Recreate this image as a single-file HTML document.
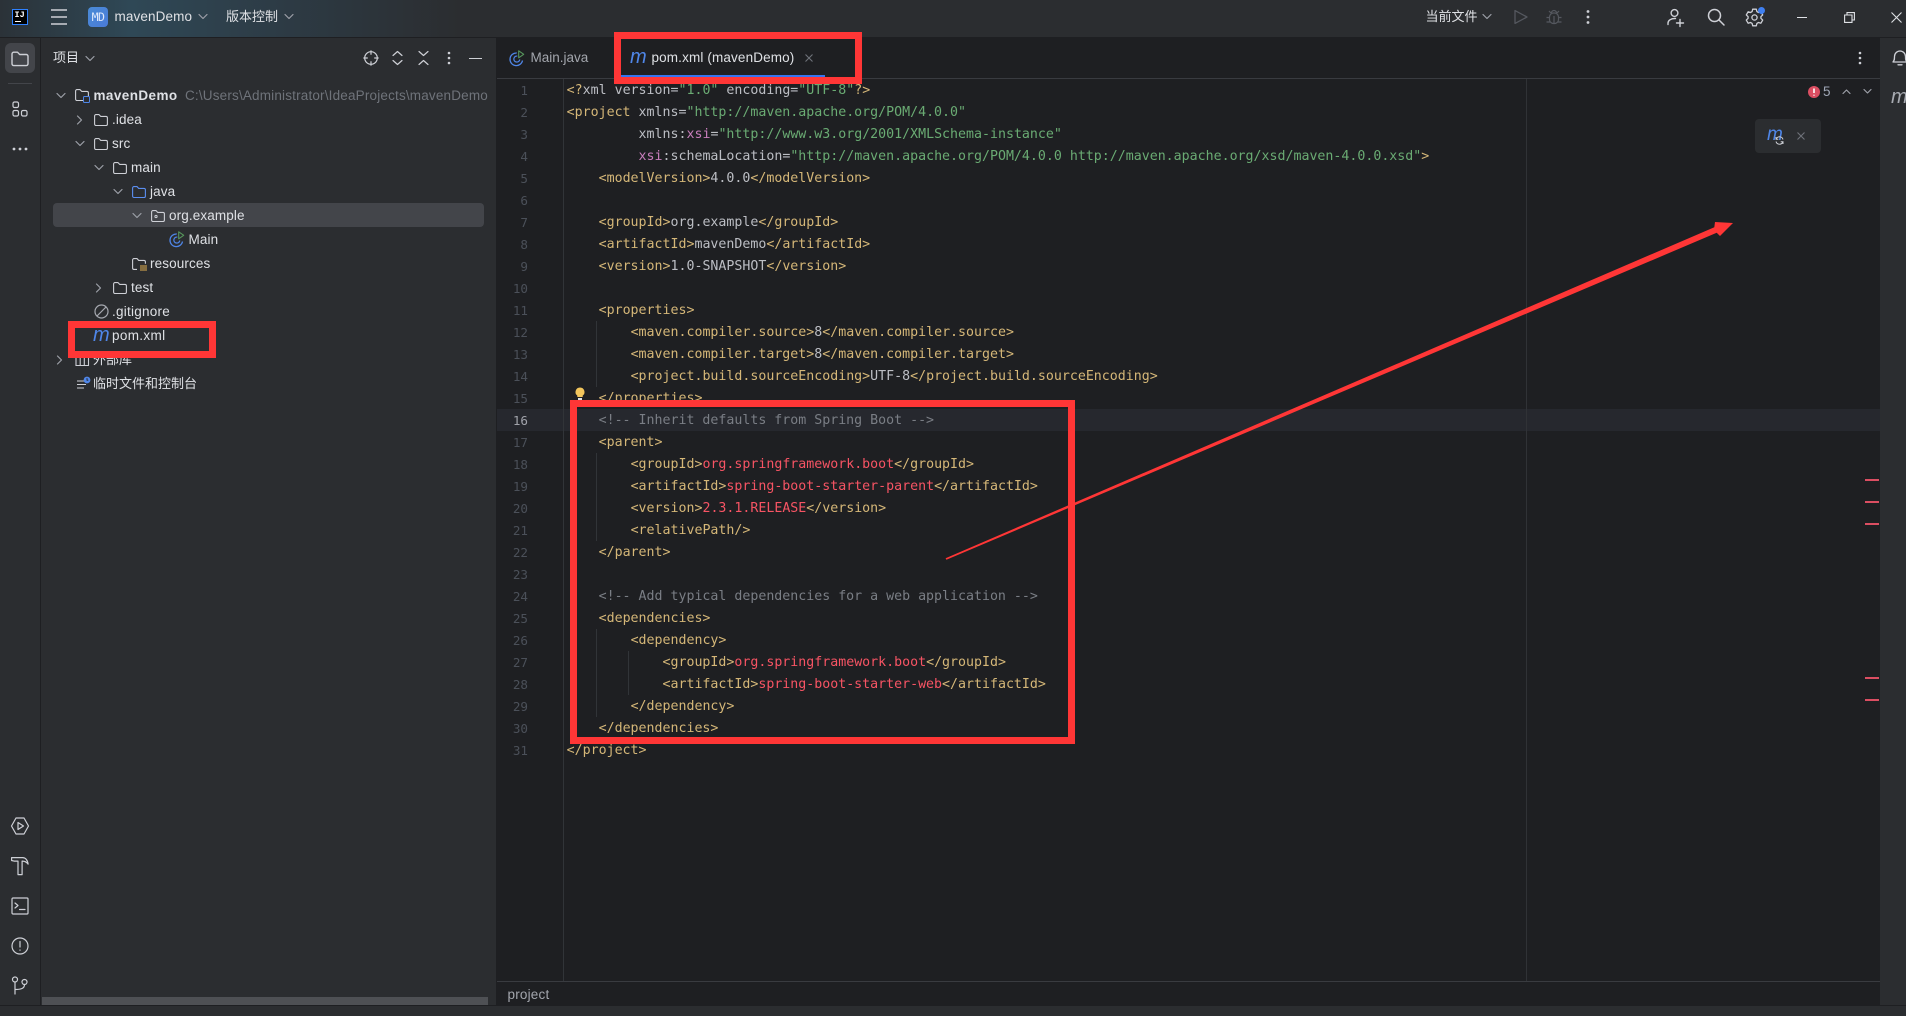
<!DOCTYPE html>
<html lang="zh"><head><meta charset="utf-8"><title>mavenDemo</title>
<style>
*{box-sizing:border-box}
html,body{margin:0;padding:0;width:1906px;height:1016px;overflow:hidden;background:#2b2d30}
body{position:relative;font-family:"Liberation Sans","Noto Sans CJK SC",sans-serif;font-size:13.5px;color:#dfe1e5}
.a{position:absolute}
.tx{position:absolute;white-space:nowrap;line-height:24px;height:24px;letter-spacing:.12px}
svg{position:absolute;overflow:visible}
.ln{position:absolute;white-space:pre;font-family:"DejaVu Sans Mono","Liberation Mono",monospace;font-size:13.28px;line-height:22px;height:22px;left:566.67px;color:#bcbec4;margin-top:1px}
.n{position:absolute;left:496px;width:32px;text-align:right;font-family:"DejaVu Sans Mono","Liberation Mono",monospace;font-size:12.6px;line-height:22px;height:22px;color:#4b5059;margin-top:1px}
.t{color:#d5b778}.s{color:#6aab73}.c{color:#7a7e85}.x{color:#c77dbb}.e{color:#f75464}.v{color:#bcbec4}
.g{position:absolute;width:1px;background:#313438}
.st{position:absolute;left:1865px;width:14px;height:2px;background:#db4e62}
.i{fill:none;stroke:#ced0d6;stroke-width:1.2;stroke-linecap:round;stroke-linejoin:round}
.cv{fill:none;stroke:#9da0a8;stroke-width:1.2;stroke-linecap:round;stroke-linejoin:round}
.red{position:absolute;border:7px solid #ff3636}
</style></head><body>

<!-- title bar -->
<div class="a" style="left:0;top:0;width:1906px;height:37px;background:linear-gradient(90deg,#2b3238 0,#2f4856 130px,#2d3b45 280px,#2b2d30 460px)"></div>
<div class="a" style="left:0;top:37px;width:1906px;height:1px;background:#1e1f22"></div>
<div class="a" style="left:12px;top:9px;width:16px;height:16px;background:#000;border:1.3px solid #2f82ff"></div>
<div class="a" style="left:14.5px;top:10px;font:bold 8.5px/10px 'Liberation Mono',monospace;color:#fff">IJ</div>
<div class="a" style="left:15px;top:21px;width:6px;height:1.2px;background:#fff"></div>
<svg style="left:50px;top:8px" width="18" height="18"><path d="M1 2h16M1 9h16M1 16h16" stroke="#ced0d6" stroke-width="1.4" fill="none"/></svg>
<div class="a" style="left:88px;top:7px;width:20px;height:20px;border-radius:4px;background:linear-gradient(135deg,#4a8bd6,#4a7bd8);color:#dfe9fb;font:11.5px/20px 'DejaVu Sans Mono',monospace;text-align:center;letter-spacing:-.5px">MD</div>
<div class="tx" style="left:114.5px;top:5px;font-size:13.5px">mavenDemo</div>
<svg style="left:198px;top:13px" width="10" height="8"><path class="cv" d="M1 1.5l4 4 4-4"/></svg>
<div class="tx" style="left:226px;top:5px;font-size:13px;letter-spacing:0">版本控制</div>
<svg style="left:284px;top:13px" width="10" height="8"><path class="cv" d="M1 1.5l4 4 4-4"/></svg>

<div class="tx" style="left:1425.5px;top:5px;font-size:13px;letter-spacing:0">当前文件</div>
<svg style="left:1482px;top:13px" width="10" height="8"><path class="cv" d="M1 1.5l4 4 4-4"/></svg>
<svg style="left:1513px;top:9px" width="16" height="16"><path d="M2 1.6v12.8L14 8z" fill="none" stroke="#55585f" stroke-width="1.3" stroke-linejoin="round"/></svg>
<svg style="left:1546px;top:9px" width="16" height="16"><g fill="none" stroke="#55585f" stroke-width="1.2"><rect x="3.500" y="4" width="9" height="10.500" rx="4"/><path d="M5.500 4a2.500 2.500 0 0 1 5 0M.5 8.500h3M12.500 8.500h3M.5 13H4M12 13h3.500M3 2l2 2M13 2l-2 2M8 7v7"/></g></svg>
<svg style="left:1586px;top:9px" width="4" height="16"><circle cx="2" cy="2.5" r="1.4" fill="#ced0d6"/><circle cx="2" cy="8" r="1.4" fill="#ced0d6"/><circle cx="2" cy="13.5" r="1.4" fill="#ced0d6"/></svg>
<svg style="left:1667px;top:8px" width="19" height="19"><g class="i" style="stroke-width:1.4"><circle cx="7.5" cy="5" r="3.4"/><path d="M1 16.5v-1.5c0-2.5 3-4.500 6.500-4.500h1M13 11.500v7M9.500 15h7"/></g></svg>
<svg style="left:1707px;top:8px" width="18" height="18"><g class="i" style="stroke-width:1.5"><circle cx="7.5" cy="7.5" r="6"/><path d="M12 12l5 5"/></g></svg>
<svg style="left:1746px;top:8px" width="18" height="19"><g class="i" style="stroke-width:1.3"><path d="M6.7 1.2h3.6l.6 2.4 1.6.9 2.4-.7 1.8 3.1-1.8 1.8v1.6l1.8 1.8-1.8 3.1-2.4-.7-1.6.9-.6 2.4H6.7l-.6-2.4-1.6-.9-2.4.7L.3 12.1l1.8-1.8V8.7L.3 6.9l1.8-3.1 2.4.7 1.6-.9z"/><circle cx="8.5" cy="9.5" r="2.6"/></g></svg>
<div class="a" style="left:1758px;top:7px;width:7px;height:7px;border-radius:50%;background:#3f7ff0"></div>
<div class="a" style="left:1797px;top:16.5px;width:10px;height:1.2px;background:#dfe1e5"></div>
<svg style="left:1844px;top:12px" width="11" height="11"><path d="M.6 3h7.4v7.4H.6zM3 3V.6h7.4V8H8" fill="none" stroke="#dfe1e5" stroke-width="1.1"/></svg>
<svg style="left:1891px;top:12px" width="11" height="11"><path d="M.5.5l10 10M10.500.5l-10 10" fill="none" stroke="#dfe1e5" stroke-width="1.1"/></svg>

<!-- left tool strip -->
<div class="a" style="left:40px;top:38px;width:1px;height:968px;background:#1e1f22"></div>
<div class="a" style="left:5px;top:43px;width:30px;height:30px;border-radius:6px;background:#43454a"></div>
<svg style="left:11px;top:51px" width="18" height="15"><path class="i" style="stroke-width:1.4" d="M1 3a1.800 1.800 0 0 1 1.800-1.800h3.700l2.200 2.300h6.500a1.800 1.800 0 0 1 1.800 1.800v7.500a1.800 1.800 0 0 1-1.800 1.800H2.800A1.800 1.800 0 0 1 1 12.800z"/></svg>
<div class="a" style="left:8px;top:83px;width:24px;height:1px;background:#43454a"></div>
<svg style="left:12px;top:101px" width="16" height="16"><g class="i"><rect x="1" y="1" width="5.500" height="5.500" rx="1.500"/><rect x="1" y="9.500" width="5.500" height="5.500" rx="1.500"/><rect x="9.500" y="9.500" width="5.500" height="5.500" rx="1.500"/></g></svg>
<svg style="left:12px;top:147px" width="16" height="4"><g fill="#ced0d6"><circle cx="2" cy="2" r="1.400"/><circle cx="8" cy="2" r="1.400"/><circle cx="14" cy="2" r="1.400"/></g></svg>
<svg style="left:11px;top:817px" width="18" height="18"><g class="i" style="stroke-width:1.200"><path d="M5 1h8l4.500 8-4.500 8H5L.500 9z"/><path d="M7 5.500v7l5.500-3.500z"/></g></svg>
<svg style="left:11px;top:857px" width="18" height="18"><path class="i" style="stroke-width:1.200" d="M.6 .6h11c3 0 5 2.500 5.500 6.500-1.500-2-3.500-3-5.500-3h-.5v13.500H7V4.100H3L.6 3.500z"/></svg>
<svg style="left:11px;top:897px" width="18" height="18"><g class="i" style="stroke-width:1.200"><rect x="1" y="1" width="16" height="16" rx="1"/><path d="M4 6l3 2.500-3 2.500M8.500 12.500H14"/></g></svg>
<svg style="left:11px;top:937px" width="18" height="18"><g class="i" style="stroke-width:1.200"><circle cx="9" cy="9" r="8"/><path d="M9 4.500v5.500M9 13v.3"/></g></svg>
<svg style="left:11px;top:976px" width="18" height="19"><g class="i" style="stroke-width:1.200"><circle cx="4" cy="3.500" r="2.500"/><circle cx="13.500" cy="6" r="2.500"/><path d="M4 6v12M4 13.500c6 0 9.500-1 9.500-5"/></g></svg>

<!-- project panel -->
<div class="tx" style="left:53px;top:46px;font-size:13px;letter-spacing:0">项目</div>
<svg style="left:85px;top:55px" width="10" height="8"><path class="cv" d="M1 1.500l4 4 4-4"/></svg>
<svg style="left:363px;top:50px" width="16" height="16"><g class="i" style="stroke-width:1.200"><circle cx="8" cy="8" r="6.300"/><path d="M8 .8v3.500M8 11.700v3.500M.8 8h3.500M11.700 8h3.500"/></g></svg>
<svg style="left:392px;top:50px" width="11" height="16"><path class="i" d="M1 5.500l4.500-4 4.500 4M1 10.500l4.500 4 4.500-4"/></svg>
<svg style="left:418px;top:50px" width="11" height="16"><path class="i" d="M1 1.500l4.500 4 4.500-4M1 14.500l4.500-4 4.500 4"/></svg>
<svg style="left:447px;top:51px" width="4" height="14"><g fill="#ced0d6"><circle cx="2" cy="2" r="1.300"/><circle cx="2" cy="7" r="1.300"/><circle cx="2" cy="12" r="1.300"/></g></svg>
<div class="a" style="left:469px;top:57.500px;width:13px;height:1.300px;background:#ced0d6"></div>

<div class="a" style="left:53px;top:203px;width:431px;height:24px;border-radius:4px;background:#43454a"></div>

<svg width="0" height="0" style="left:0;top:0"><defs>
<symbol id="fo" viewBox="0 0 14 12"><path d="M.6 2a1.400 1.400 0 0 1 1.400-1.400h3l1.700 1.800H12a1.400 1.400 0 0 1 1.400 1.400v6.300a1.400 1.400 0 0 1-1.400 1.400H2a1.400 1.400 0 0 1-1.400-1.400z" fill="none" stroke="#ced0d6" stroke-width="1.100" stroke-linejoin="round"/></symbol>
<symbol id="cd" viewBox="0 0 10 8"><path d="M1 1.500l4 4 4-4" fill="none" stroke="#9da0a8" stroke-width="1.200" stroke-linecap="round" stroke-linejoin="round"/></symbol>
<symbol id="cr" viewBox="0 0 8 10"><path d="M1.500 1l4 4-4 4" fill="none" stroke="#9da0a8" stroke-width="1.200" stroke-linecap="round" stroke-linejoin="round"/></symbol>
</defs></svg>

<!-- tree -->
<svg style="left:56px;top:91.500px" width="10" height="8"><use href="#cd"/></svg>
<svg style="left:75px;top:89px" width="14" height="12"><use href="#fo"/></svg>
<div class="a" style="left:83px;top:96px;width:7px;height:7px;border:1.200px solid #4f86e8;border-radius:1.500px;background:#2b2d30"></div>
<div class="tx" style="left:93.500px;top:84px;font-weight:bold;font-size:13.500px;letter-spacing:.42px">mavenDemo</div>
<div class="tx" style="left:185px;top:84px;color:#6f737a;font-size:13.500px;letter-spacing:.18px">C:\Users\Administrator\IdeaProjects\mavenDemo</div>

<svg style="left:76px;top:114.500px" width="8" height="10"><use href="#cr"/></svg>
<svg style="left:94px;top:114px" width="14" height="12"><use href="#fo"/></svg>
<div class="tx" style="left:112px;top:107.500px">.idea</div>

<svg style="left:75px;top:139.500px" width="10" height="8"><use href="#cd"/></svg>
<svg style="left:94px;top:138px" width="14" height="12"><use href="#fo"/></svg>
<div class="tx" style="left:112px;top:131.500px">src</div>

<svg style="left:94px;top:163.500px" width="10" height="8"><use href="#cd"/></svg>
<svg style="left:113px;top:162px" width="14" height="12"><use href="#fo"/></svg>
<div class="tx" style="left:131px;top:155.500px">main</div>

<svg style="left:113px;top:187.500px" width="10" height="8"><use href="#cd"/></svg>
<svg style="left:132px;top:186px" width="14" height="12"><path d="M.6 2a1.400 1.400 0 0 1 1.400-1.400h3l1.700 1.800H12a1.400 1.400 0 0 1 1.400 1.400v6.300a1.400 1.400 0 0 1-1.400 1.400H2a1.400 1.400 0 0 1-1.400-1.400z" fill="none" stroke="#5b8ef0" stroke-width="1.100"/></svg>
<div class="tx" style="left:150px;top:179.500px">java</div>

<svg style="left:132px;top:211.500px" width="10" height="8"><use href="#cd"/></svg>
<svg style="left:151px;top:210px" width="14" height="12"><use href="#fo"/><circle cx="5" cy="6.500" r="1.100" fill="none" stroke="#ced0d6"/></svg>
<div class="tx" style="left:169px;top:203.500px">org.example</div>

<svg style="left:170px;top:231px" width="15" height="16"><g fill="none"><path d="M12.500 10.500A6.300 6.300 0 1 1 6.800 3" stroke="#4f86e8" stroke-width="1.300"/><path d="M9.800 9.500a3 3 0 1 1-2.500-3.400" stroke="#4f86e8" stroke-width="1.200"/><path d="M8.700 .8v7l5-3.500z" stroke="#57965c" stroke-width="1.100" stroke-linejoin="round"/></g></svg>
<div class="tx" style="left:188.500px;top:227.500px">Main</div>

<svg style="left:132px;top:258px" width="16" height="13"><path d="M5 11.400H2a1.400 1.400 0 0 1-1.400-1.400V2A1.400 1.400 0 0 1 2 .6h3l1.700 1.800H12a1.400 1.400 0 0 1 1.400 1.400v2" fill="none" stroke="#ced0d6" stroke-width="1.100"/><path d="M8 8h7M8 10h7M8 12h7" stroke="#e0b050" stroke-width="1.100"/></svg>
<div class="tx" style="left:150px;top:251.500px">resources</div>

<svg style="left:95px;top:282.500px" width="8" height="10"><use href="#cr"/></svg>
<svg style="left:113px;top:282px" width="14" height="12"><use href="#fo"/></svg>
<div class="tx" style="left:131px;top:275.500px">test</div>

<svg style="left:94px;top:304px" width="15" height="15"><g fill="none" stroke="#a6a9b0" stroke-width="1.200"><circle cx="7.500" cy="7.500" r="6.500"/><path d="M3 12l9-9"/></g></svg>
<div class="tx" style="left:112px;top:299.500px;letter-spacing:.25px">.gitignore</div>

<div class="a" style="left:93px;top:327px;font:italic 20px/16px 'Liberation Sans',sans-serif;color:#4f86e8;letter-spacing:0">m</div>
<div class="tx" style="left:112px;top:323.500px;letter-spacing:.35px">pom.xml</div>

<svg style="left:56px;top:355px" width="8" height="10"><use href="#cr"/></svg>
<svg style="left:75px;top:354px" width="15" height="13"><path d="M1 1v10.500h12.500V1M5.200 1v10.500M9.300 1v10.500" fill="none" stroke="#ced0d6" stroke-width="1.100"/></svg>
<div class="tx" style="left:93px;top:348px;font-size:13px;letter-spacing:0">外部库</div>

<svg style="left:76px;top:376px" width="16" height="15"><path d="M1 5h7M1 8.500h9M1 12h7M1 15h0" fill="none" stroke="#ced0d6" stroke-width="1.100"/><circle cx="11" cy="4" r="3.400" fill="#4f86e8"/><path d="M11 2v2.200h1.300" stroke="#1e1f22" fill="none" stroke-width=".8"/></svg>
<div class="tx" style="left:93px;top:372px;font-size:13px;letter-spacing:0">临时文件和控制台</div>

<div class="a" style="left:42px;top:997px;width:446px;height:8px;background:#4e5054"></div>

<!-- editor -->
<div class="a" style="left:496px;top:38px;width:1384px;height:968px;background:#1e1f22"></div>
<div class="a" style="left:497px;top:78px;width:1383px;height:1px;background:#393b40"></div>

<svg style="left:510px;top:50px" width="15" height="16"><g fill="none"><path d="M12.500 10.500A6.300 6.300 0 1 1 6.800 3" stroke="#4f86e8" stroke-width="1.300"/><path d="M9.800 9.500a3 3 0 1 1-2.500-3.400" stroke="#4f86e8" stroke-width="1.200"/><path d="M8.700 .8v7l5-3.500z" stroke="#57965c" stroke-width="1.100" stroke-linejoin="round"/></g></svg>
<div class="tx" style="left:530.500px;top:46px;color:#a3a6ad;letter-spacing:0">Main.java</div>
<div class="a" style="left:630px;top:49px;font:italic 20px/16px 'Liberation Sans',sans-serif;color:#4f86e8">m</div>
<div class="tx" style="left:651.500px;top:46px;color:#dfe1e5;letter-spacing:.14px">pom.xml (mavenDemo)</div>
<svg style="left:805px;top:54px" width="8" height="8"><path d="M.5.500l7 7M7.500.500l-7 7" stroke="#6f737a" stroke-width="1.100" fill="none"/></svg>
<div class="a" style="left:621px;top:75px;width:204px;height:3px;background:#3574f0"></div>
<svg style="left:1858px;top:51px" width="4" height="14"><g fill="#ced0d6"><circle cx="2" cy="2" r="1.300"/><circle cx="2" cy="7" r="1.300"/><circle cx="2" cy="12" r="1.300"/></g></svg>

<div class="a" style="left:497px;top:409px;width:1383px;height:22px;background:#26282e"></div>
<div class="g" style="left:563px;top:79px;height:902px"></div>
<div class="g" style="left:1526px;top:79px;height:902px;background:#303236"></div>
<div class="g" style="left:596px;top:321px;height:66px"></div>
<div class="g" style="left:596px;top:453px;height:88px"></div>
<div class="g" style="left:596px;top:629px;height:88px"></div>
<div class="g" style="left:628px;top:651px;height:44px"></div>

<div class="n" style="top:79px">1</div><div class="n" style="top:101px">2</div><div class="n" style="top:123px">3</div><div class="n" style="top:145px">4</div><div class="n" style="top:167px">5</div><div class="n" style="top:189px">6</div><div class="n" style="top:211px">7</div><div class="n" style="top:233px">8</div><div class="n" style="top:255px">9</div><div class="n" style="top:277px">10</div><div class="n" style="top:299px">11</div><div class="n" style="top:321px">12</div><div class="n" style="top:343px">13</div><div class="n" style="top:365px">14</div><div class="n" style="top:387px">15</div><div class="n" style="top:409px;color:#a1a3ab">16</div><div class="n" style="top:431px">17</div><div class="n" style="top:453px">18</div><div class="n" style="top:475px">19</div><div class="n" style="top:497px">20</div><div class="n" style="top:519px">21</div><div class="n" style="top:541px">22</div><div class="n" style="top:563px">23</div><div class="n" style="top:585px">24</div><div class="n" style="top:607px">25</div><div class="n" style="top:629px">26</div><div class="n" style="top:651px">27</div><div class="n" style="top:673px">28</div><div class="n" style="top:695px">29</div><div class="n" style="top:717px">30</div><div class="n" style="top:739px">31</div>

<div class="ln" style="top:79px"><span class="t">&lt;?</span>xml version=<span class="s">"1.0"</span> encoding=<span class="s">"UTF-8"</span><span class="t">?&gt;</span></div>
<div class="ln" style="top:101px"><span class="t">&lt;project</span> xmlns=<span class="s">"http://maven.apache.org/POM/4.0.0"</span></div>
<div class="ln" style="top:123px">         xmlns:<span class="x">xsi</span>=<span class="s">"http://www.w3.org/2001/XMLSchema-instance"</span></div>
<div class="ln" style="top:145px">         <span class="x">xsi</span>:schemaLocation=<span class="s">"http://maven.apache.org/POM/4.0.0 http://maven.apache.org/xsd/maven-4.0.0.xsd"</span><span class="t">&gt;</span></div>
<div class="ln" style="top:167px">    <span class="t">&lt;modelVersion&gt;</span>4.0.0<span class="t">&lt;/modelVersion&gt;</span></div>
<div class="ln" style="top:211px">    <span class="t">&lt;groupId&gt;</span>org.example<span class="t">&lt;/groupId&gt;</span></div>
<div class="ln" style="top:233px">    <span class="t">&lt;artifactId&gt;</span>mavenDemo<span class="t">&lt;/artifactId&gt;</span></div>
<div class="ln" style="top:255px">    <span class="t">&lt;version&gt;</span>1.0-SNAPSHOT<span class="t">&lt;/version&gt;</span></div>
<div class="ln" style="top:299px">    <span class="t">&lt;properties&gt;</span></div>
<div class="ln" style="top:321px">        <span class="t">&lt;maven.compiler.source&gt;</span>8<span class="t">&lt;/maven.compiler.source&gt;</span></div>
<div class="ln" style="top:343px">        <span class="t">&lt;maven.compiler.target&gt;</span>8<span class="t">&lt;/maven.compiler.target&gt;</span></div>
<div class="ln" style="top:365px">        <span class="t">&lt;project.build.sourceEncoding&gt;</span>UTF-8<span class="t">&lt;/project.build.sourceEncoding&gt;</span></div>
<div class="ln" style="top:387px">    <span class="t">&lt;/properties&gt;</span></div>
<div class="ln c" style="top:409px;color:#7a7e85">    &lt;!-- Inherit defaults from Spring Boot --&gt;</div>
<div class="ln" style="top:431px">    <span class="t">&lt;parent&gt;</span></div>
<div class="ln" style="top:453px">        <span class="t">&lt;groupId&gt;</span><span class="e">org.springframework.boot</span><span class="t">&lt;/groupId&gt;</span></div>
<div class="ln" style="top:475px">        <span class="t">&lt;artifactId&gt;</span><span class="e">spring-boot-starter-parent</span><span class="t">&lt;/artifactId&gt;</span></div>
<div class="ln" style="top:497px">        <span class="t">&lt;version&gt;</span><span class="e">2.3.1.RELEASE</span><span class="t">&lt;/version&gt;</span></div>
<div class="ln" style="top:519px">        <span class="t">&lt;relativePath/&gt;</span></div>
<div class="ln" style="top:541px">    <span class="t">&lt;/parent&gt;</span></div>
<div class="ln c" style="top:585px;color:#7a7e85">    &lt;!-- Add typical dependencies for a web application --&gt;</div>
<div class="ln" style="top:607px">    <span class="t">&lt;dependencies&gt;</span></div>
<div class="ln" style="top:629px">        <span class="t">&lt;dependency&gt;</span></div>
<div class="ln" style="top:651px">            <span class="t">&lt;groupId&gt;</span><span class="e">org.springframework.boot</span><span class="t">&lt;/groupId&gt;</span></div>
<div class="ln" style="top:673px">            <span class="t">&lt;artifactId&gt;</span><span class="e">spring-boot-starter-web</span><span class="t">&lt;/artifactId&gt;</span></div>
<div class="ln" style="top:695px">        <span class="t">&lt;/dependency&gt;</span></div>
<div class="ln" style="top:717px">    <span class="t">&lt;/dependencies&gt;</span></div>
<div class="ln" style="top:739px"><span class="t">&lt;/project&gt;</span></div>

<!-- lightbulb -->
<svg style="left:575px;top:387px" width="10" height="14"><path d="M5 .500a4.500 4.500 0 0 1 2.700 8.100v1.400H2.300V8.600A4.500 4.500 0 0 1 5 .500z" fill="#f2c55c"/><rect x="3" y="11" width="4" height="2" fill="#dfe1e5"/></svg>

<!-- inspection widget -->
<svg style="left:1808px;top:86px" width="12" height="12"><circle cx="6" cy="6" r="6" fill="#db4e62"/><path d="M6 2.500v4.500M6 8.800v.8" stroke="#fff" stroke-width="1.600"/></svg>
<div class="tx" style="left:1823px;top:80px;color:#9fa6b5;font-size:13.500px">5</div>
<svg style="left:1842px;top:88px" width="9" height="7"><path class="cv" d="M1 5.500l3.500-3.500 3.500 3.500"/></svg>
<svg style="left:1863px;top:88px" width="9" height="7"><path class="cv" d="M1 1.500l3.500 3.500 3.500-3.500"/></svg>

<!-- maven reload popup -->
<div class="a" style="left:1755px;top:119px;width:66px;height:34px;border-radius:4px;background:#2b2d30"></div>
<div class="a" style="left:1767px;top:127px;font:italic 19px/16px 'Liberation Sans',sans-serif;color:#4f86e8">m</div>
<svg style="left:1775px;top:136px" width="9" height="9"><path d="M8 3.500A3.600 3.600 0 0 0 1.200 3M1 5.500A3.600 3.600 0 0 0 7.800 6M1 1v2.300h2.300M8 8V5.700H5.700" stroke="#ced0d6" stroke-width="1" fill="none"/></svg>
<svg style="left:1797px;top:132px" width="8" height="8"><path d="M.5.500l7 7M7.500.500l-7 7" stroke="#6f737a" stroke-width="1.100" fill="none"/></svg>

<!-- error stripes -->
<div class="st" style="top:479px"></div><div class="st" style="top:501px"></div><div class="st" style="top:523px"></div><div class="st" style="top:677px"></div><div class="st" style="top:699px"></div>

<!-- breadcrumb -->
<div class="a" style="left:497px;top:981px;width:1383px;height:1px;background:#393b40"></div>
<div class="tx" style="left:507.500px;top:983px;color:#a3a6ad;font-size:13.500px;letter-spacing:.2px">project</div>

<!-- right strip -->
<div class="a" style="left:1880px;top:38px;width:26px;height:968px;background:#2b2d30"></div>
<svg style="left:1892px;top:49px" width="16" height="18"><path class="i" d="M1 13c1.500-1.500 1.500-3 1.500-5.500a5.500 5.500 0 0 1 11 0C13.500 10 13.500 11.500 15 13zM6 15.800h4" style="stroke-width:1.300"/></svg>
<div class="a" style="left:1891px;top:89px;font:italic 20px/16px 'Liberation Sans',sans-serif;color:#a8abb2">m</div>

<!-- status bar -->
<div class="a" style="left:0;top:1005px;width:1906px;height:1px;background:#1e1f22"></div>
<div class="a" style="left:0;top:1006px;width:1906px;height:10px;background:#2b2d30"></div>

<!-- annotations -->
<div class="red" style="left:68px;top:321px;width:148px;height:37px"></div>
<div class="red" style="left:614px;top:32px;width:248px;height:52px"></div>
<div class="red" style="left:570px;top:400px;width:505px;height:344px"></div>
<svg style="left:0;top:0" width="1906" height="1016"><polygon points="945.600,558.200 1714.300,227.200 1715,222 1733,223 1720,236 1716.700,232.800 946.400,559.800" fill="#ff3636"/></svg>
</body></html>
